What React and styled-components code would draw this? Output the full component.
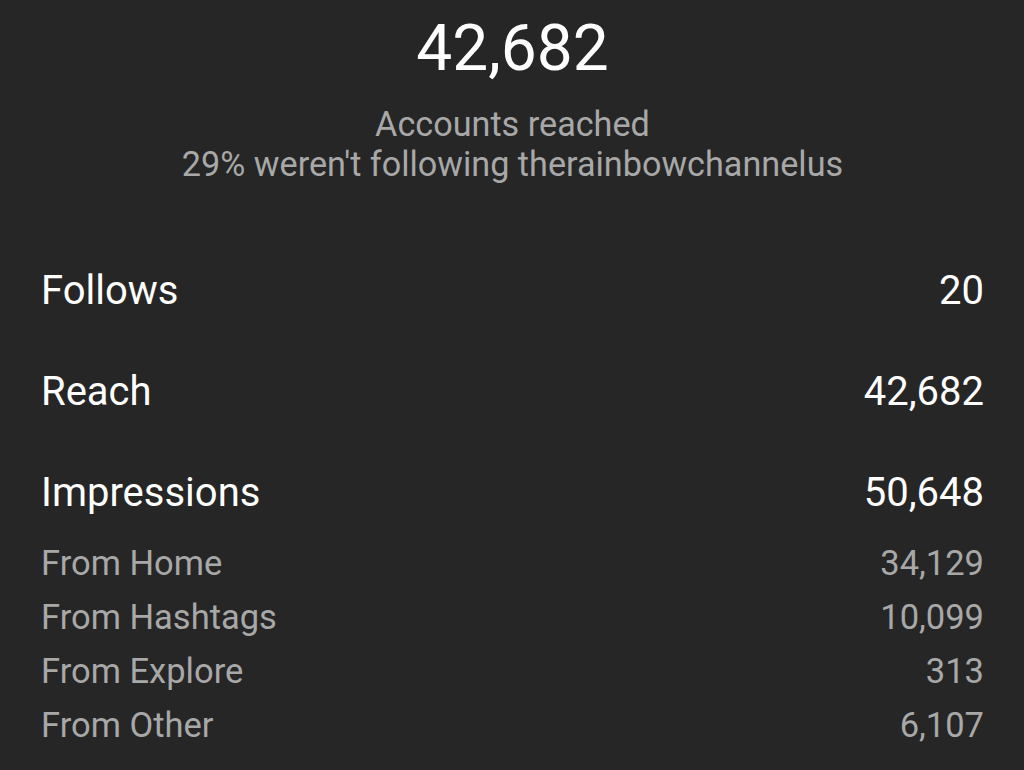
import React from "react";
import styled, { createGlobalStyle } from "styled-components";

const stats = [
  { label: "Follows", value: "20" },
  { label: "Reach", value: "42,682" },
  {
    label: "Impressions",
    value: "50,648",
    breakdown: [
      { label: "From Home", value: "34,129" },
      { label: "From Hashtags", value: "10,099" },
      { label: "From Explore", value: "313" },
      { label: "From Other", value: "6,107" },
    ],
  },
];

const GlobalStyle = createGlobalStyle`
  html, body {
    margin: 0;
    padding: 0;
    background: #262626;
  }
  body {
    font-family: Roboto, "Liberation Sans", sans-serif;
    -webkit-font-smoothing: antialiased;
  }
`;

const Page = styled.div`
  min-height: 770px;
  box-sizing: border-box;
  background: #262626;
  padding: 11px 40px 0 41px;
  overflow: hidden;
`;

const Header = styled.header`
  display: flex;
  flex-direction: column;
  align-items: center;
  text-align: center;
`;

const BigNumber = styled.div`
  font-size: 64px;
  line-height: 76px;
  color: #ffffff;
  font-weight: 400;
`;

const Caption = styled.div`
  margin-top: 17px;
  font-size: 34.2px;
  line-height: 40px;
  color: #a8a8a8;
`;

const StatList = styled.div`
  margin-top: 80px;
  display: flex;
  flex-direction: column;
  gap: 47px;
`;

const Group = styled.div`
  display: flex;
  flex-direction: column;
`;

const Breakdown = styled.div`
  margin-top: 16px;
  display: flex;
  flex-direction: column;
`;

const Row = styled.div`
  display: flex;
  justify-content: space-between;
  align-items: baseline;
  height: 54px;
  line-height: 54px;
  font-size: ${(p) => (p.$sub ? "34.5px" : "40px")};
  color: ${(p) => (p.$sub ? "#a8a8a8" : "#ffffff")};
`;

const App = () => {
  return (
    <>
      <GlobalStyle />
      <Page>
        <Header>
          <BigNumber>42,682</BigNumber>
          <Caption>
            Accounts reached
            <br />
            29% weren't following therainbowchannelus
          </Caption>
        </Header>
        <StatList>
          {stats.map((stat) => (
            <Group key={stat.label}>
              <Row>
                <span>{stat.label}</span>
                <span>{stat.value}</span>
              </Row>
              {stat.breakdown && (
                <Breakdown>
                  {stat.breakdown.map((item) => (
                    <Row $sub key={item.label}>
                      <span>{item.label}</span>
                      <span>{item.value}</span>
                    </Row>
                  ))}
                </Breakdown>
              )}
            </Group>
          ))}
        </StatList>
      </Page>
    </>
  );
};

export default App;
